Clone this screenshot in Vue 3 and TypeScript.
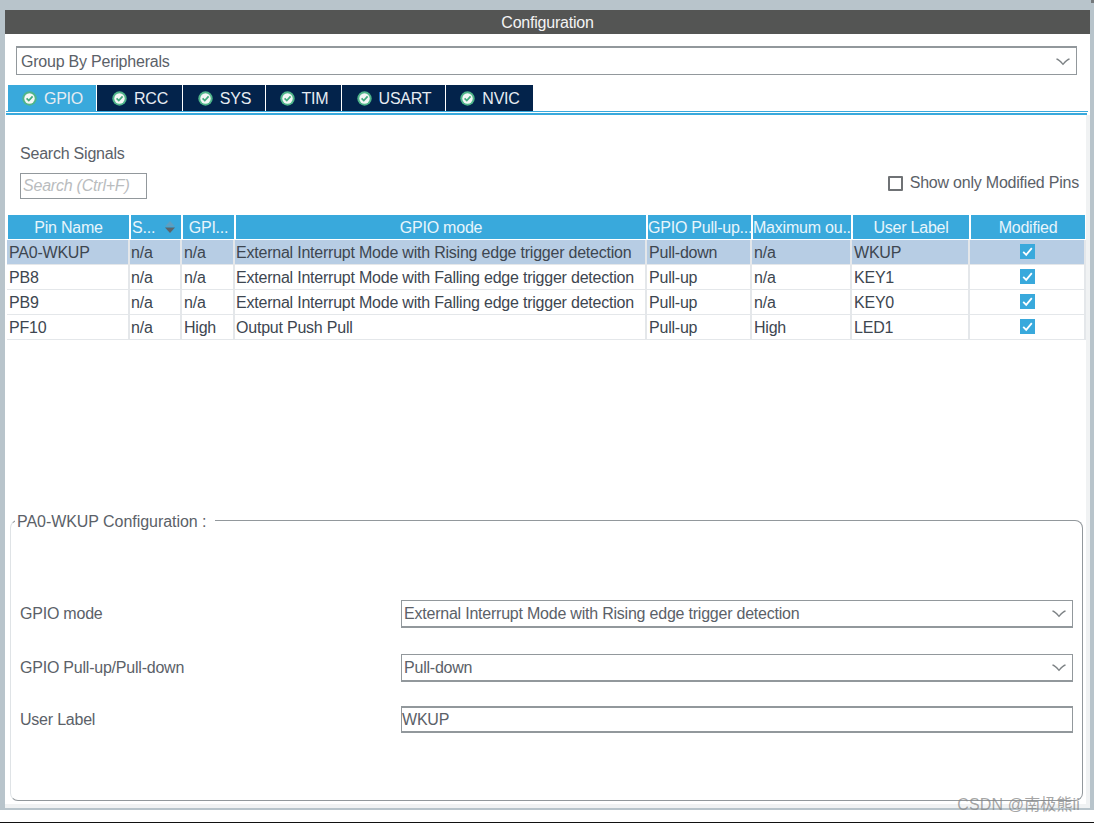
<script setup lang="ts">
interface Row { pin: string; s: string; gpi: string; mode: string; pull: string; max: string; label: string }
const tabs: string[] = ['GPIO', 'RCC', 'SYS', 'TIM', 'USART', 'NVIC']
const rows: Row[] = [
  { pin: 'PA0-WKUP', s: 'n/a', gpi: 'n/a', mode: 'External Interrupt Mode with Rising edge trigger detection', pull: 'Pull-down', max: 'n/a', label: 'WKUP' },
  { pin: 'PB8', s: 'n/a', gpi: 'n/a', mode: 'External Interrupt Mode with Falling edge trigger detection', pull: 'Pull-up', max: 'n/a', label: 'KEY1' },
  { pin: 'PB9', s: 'n/a', gpi: 'n/a', mode: 'External Interrupt Mode with Falling edge trigger detection', pull: 'Pull-up', max: 'n/a', label: 'KEY0' },
  { pin: 'PF10', s: 'n/a', gpi: 'High', mode: 'Output Push Pull', pull: 'Pull-up', max: 'High', label: 'LED1' },
]
</script>

<template>
  <div class="page">
    <div class="frame">
      <div class="corner"></div>
      <div class="panel">
        <div class="top">
          <div class="title">Configuration</div>
          <div class="group-select">
            <span>Group By Peripherals</span>
            <svg class="chev" width="14" height="8" viewBox="0 0 14 8"><path d="M0.5 1 Q3 1.5 7 6.3 Q11 1.5 13.5 1" fill="none" stroke="#7d8285" stroke-width="1.3"/></svg>
          </div>
          <div class="tabs">
            <div v-for="(t, i) in tabs" :key="t" class="tab" :class="['tab-' + i, { active: i === 0 }]">
              <svg width="15" height="15" viewBox="0 0 15 15">
                <circle cx="7.5" cy="7.5" r="7.2" fill="#4fb58a"/>
                <circle cx="7.5" cy="7.5" r="5.2" fill="#f4f7f6"/>
                <path d="M4.6 7.4 L6.8 9.6 L10.6 5.4" fill="none" stroke="#41ab7c" stroke-width="1.7"/>
              </svg>
              <span>{{ t }}</span>
            </div>
          </div>
          <div class="line-thin"></div>
          <div class="line-thick"></div>
        </div>

        <div class="body">
          <div class="search-area">
            <div class="search-left">
              <div class="search-label">Search Signals</div>
              <div class="search-box">Search (Ctrl+F)</div>
            </div>
            <label class="modified-only">
              <span class="empty-box"></span>
              <span>Show only Modified Pins</span>
            </label>
          </div>

          <div class="table">
            <div class="grid head">
              <div class="hc">Pin Name</div>
              <div class="hc sort">
                <span>S...</span>
                <svg width="12" height="14" viewBox="0 0 12 14"><path d="M6 1 L11 6.5 H1 Z" fill="#5f9fc0"/><path d="M1 7.5 H11 L6 13 Z" fill="#5d6468"/></svg>
              </div>
              <div class="hc">GPI...</div>
              <div class="hc">GPIO mode</div>
              <div class="hc">GPIO Pull-up...</div>
              <div class="hc">Maximum ou...</div>
              <div class="hc">User Label</div>
              <div class="hc">Modified</div>
            </div>
            <div v-for="(r, i) in rows" :key="r.pin" class="grid row" :class="{ selected: i === 0 }">
              <div class="c">{{ r.pin }}</div>
              <div class="c tight">{{ r.s }}</div>
              <div class="c">{{ r.gpi }}</div>
              <div class="c tight">{{ r.mode }}</div>
              <div class="c">{{ r.pull }}</div>
              <div class="c">{{ r.max }}</div>
              <div class="c">{{ r.label }}</div>
              <div class="c mid">
                <svg width="15" height="15" viewBox="0 0 15 15"><rect width="15" height="15" fill="#39a9dc"/><path d="M3.2 7.8 L6.2 10.8 L11.8 4.2" fill="none" stroke="#fff" stroke-width="1.8"/></svg>
              </div>
            </div>
          </div>

          <fieldset class="config">
            <legend>PA0-WKUP Configuration :</legend>
            <div class="form-row row-mode">
              <div class="flabel">GPIO mode</div>
              <div class="control">
                <span>External Interrupt Mode with Rising edge trigger detection</span>
                <svg class="chev" width="14" height="8" viewBox="0 0 14 8"><path d="M0.5 1 Q3 1.5 7 6.3 Q11 1.5 13.5 1" fill="none" stroke="#7d8285" stroke-width="1.3"/></svg>
              </div>
            </div>
            <div class="form-row row-pull">
              <div class="flabel">GPIO Pull-up/Pull-down</div>
              <div class="control">
                <span>Pull-down</span>
                <svg class="chev" width="14" height="8" viewBox="0 0 14 8"><path d="M0.5 1 Q3 1.5 7 6.3 Q11 1.5 13.5 1" fill="none" stroke="#7d8285" stroke-width="1.3"/></svg>
              </div>
            </div>
            <div class="form-row row-label">
              <div class="flabel">User Label</div>
              <div class="control text">WKUP</div>
            </div>
          </fieldset>
        </div>
        <div class="watermark">CSDN @南极熊ii</div>
      </div>
    </div>
    <div class="under"></div>
  </div>
</template>

<style>
html, body { margin: 0; background: #fff; }
</style>

<style scoped>
.page {
  width: 1094px;
  height: 823px;
  background: #fff;
  font-family: "Liberation Sans", Arial, sans-serif;
  font-size: 16px;
  letter-spacing: -0.22px;
  overflow: hidden;
}
.frame {
  position: relative;
  box-sizing: border-box;
  height: 810px;
  padding: 10px 4px 2px 5px;
  background: #b8c4cb;
}
.corner {
  position: absolute;
  top: 0;
  right: 0;
  width: 3px;
  height: 3px;
  background: #75797c;
}
.under {
  margin-top: 12px;
  height: 1px;
  background: #111;
}
.panel {
  position: relative;
  height: 798px;
  background: #f0f2f3;
  display: flex;
  flex-direction: column;
}
.top { background: #fff; }
.body {
  flex: 1;
  min-height: 0;
  margin: 0 4px 4px 0;
  background: #fff;
}
.title {
  box-sizing: border-box;
  height: 24px;
  padding-top: 1px;
  line-height: 23px;
  background: #545554;
  color: #f4f4f4;
  text-align: center;
}
.group-select {
  box-sizing: border-box;
  height: 29px;
  margin: 12px 13px 0 11px;
  padding: 1px 6px 0 4px;
  background: #fff;
  border: 1px solid #92989c;
  border-top-width: 2px;
  display: flex;
  align-items: center;
  justify-content: space-between;
  color: #5b6168;
}
.tabs {
  display: flex;
  gap: 1px;
  height: 26px;
  margin-top: 10px;
  padding-left: 3px;
}
.tab {
  box-sizing: border-box;
  padding-left: 1px;
  display: flex;
  align-items: center;
  justify-content: center;
  gap: 7px;
  background: #03234b;
  color: #e6ecf2;
}
.tab span { padding-top: 1px; }
.tab.active { background: #39a9dc; }
.tab-0 { width: 88px; }
.tab-1 { width: 85px; }
.tab-2 { width: 82px; }
.tab-3 { width: 75px; }
.tab-4 { width: 103px; }
.tab-5 { width: 87px; }
.line-thin {
  height: 1px;
  margin: 0 2px 0 1px;
  background: #39a9dc;
}
.line-thick {
  height: 2px;
  margin: 1px 3px 0 1px;
  background: #39a9dc;
}
.search-area {
  height: 100px;
  box-sizing: border-box;
  padding: 30px 7px 0 15px;
  display: flex;
  justify-content: space-between;
}
.search-label {
  height: 18px;
  line-height: 18px;
  color: #5b6168;
}
.search-box {
  box-sizing: border-box;
  width: 127px;
  height: 26px;
  margin-top: 10px;
  padding-left: 2px;
  line-height: 24px;
  border: 1px solid #92989c;
  color: #b9bcbe;
  font-style: italic;
}
.modified-only {
  display: flex;
  align-items: center;
  gap: 7px;
  height: 18px;
  margin-top: 29px;
  color: #5b6168;
}
.empty-box {
  box-sizing: border-box;
  width: 15px;
  height: 15px;
  border: 2px solid #6f7275;
  background: #fff;
  border-radius: 1px;
}
.table {
  height: 280px;
  padding-left: 2px;
}
.grid {
  display: grid;
  grid-template-columns: 123px 52px 53px 412px 105px 100px 118px 116px;
  width: 1079px;
}
.head {
  height: 25px;
}
.hc {
  box-sizing: border-box;
  margin: 0 1px 1px 1px;
  padding-top: 1px;
  background: #39a9dc;
  color: #e8f5fb;
  text-align: center;
  line-height: 23px;
  white-space: nowrap;
}
.sort {
  display: flex;
  align-items: center;
  justify-content: space-between;
  padding: 0 5px 0 1px;
}
.row {
  height: 25px;
  color: #3d4650;
}
.row.selected { background: #b7cde4; }
.c {
  box-sizing: border-box;
  border-right: 2px solid #e4e7ea;
  border-bottom: 1px solid #e4e7ea;
  padding: 1px 0 0 2px;
  line-height: 23px;
  white-space: nowrap;
  overflow: hidden;
}
.c.tight { padding-left: 1px; }
.mid {
  display: flex;
  align-items: center;
  justify-content: center;
  padding: 0 0 2px 1px;
}
.config {
  box-sizing: border-box;
  min-width: 0;
  width: 1073px;
  height: 292px;
  margin: 14px 0 0 5px;
  padding: 0;
  border: 1px solid #92989c;
  border-left-color: #dfe3e6;
  border-radius: 8px;
  background: #fff;
}
.config legend {
  margin-left: 4px;
  padding: 4px 9px 0 2px;
  color: #5b6168;
  line-height: 18px;
  letter-spacing: -0.05px;
}
.form-row {
  display: flex;
  align-items: center;
  padding: 0 9px 0 9px;
}
.row-mode { margin-top: 69px; }
.row-pull { margin-top: 26px; }
.row-label { margin-top: 24px; }
.flabel {
  width: 381px;
  color: #5b6168;
}
.control {
  box-sizing: border-box;
  flex: 1;
  height: 28px;
  padding: 0 6px 0 2px;
  border: 1px solid #92989c;
  border-bottom-width: 2px;
  display: flex;
  align-items: center;
  justify-content: space-between;
  color: #5b6168;
  background: #fff;
}
.control.text {
  height: 27px;
  padding-left: 0;
  border-top-width: 2px;
}
.watermark {
  position: absolute;
  right: 10px;
  bottom: -7px;
  font-family: "Liberation Sans", "Noto Sans CJK SC", sans-serif;
  font-size: 16px;
  letter-spacing: 0.15px;
  color: rgba(135, 135, 135, 0.75);
  white-space: nowrap;
}
</style>
